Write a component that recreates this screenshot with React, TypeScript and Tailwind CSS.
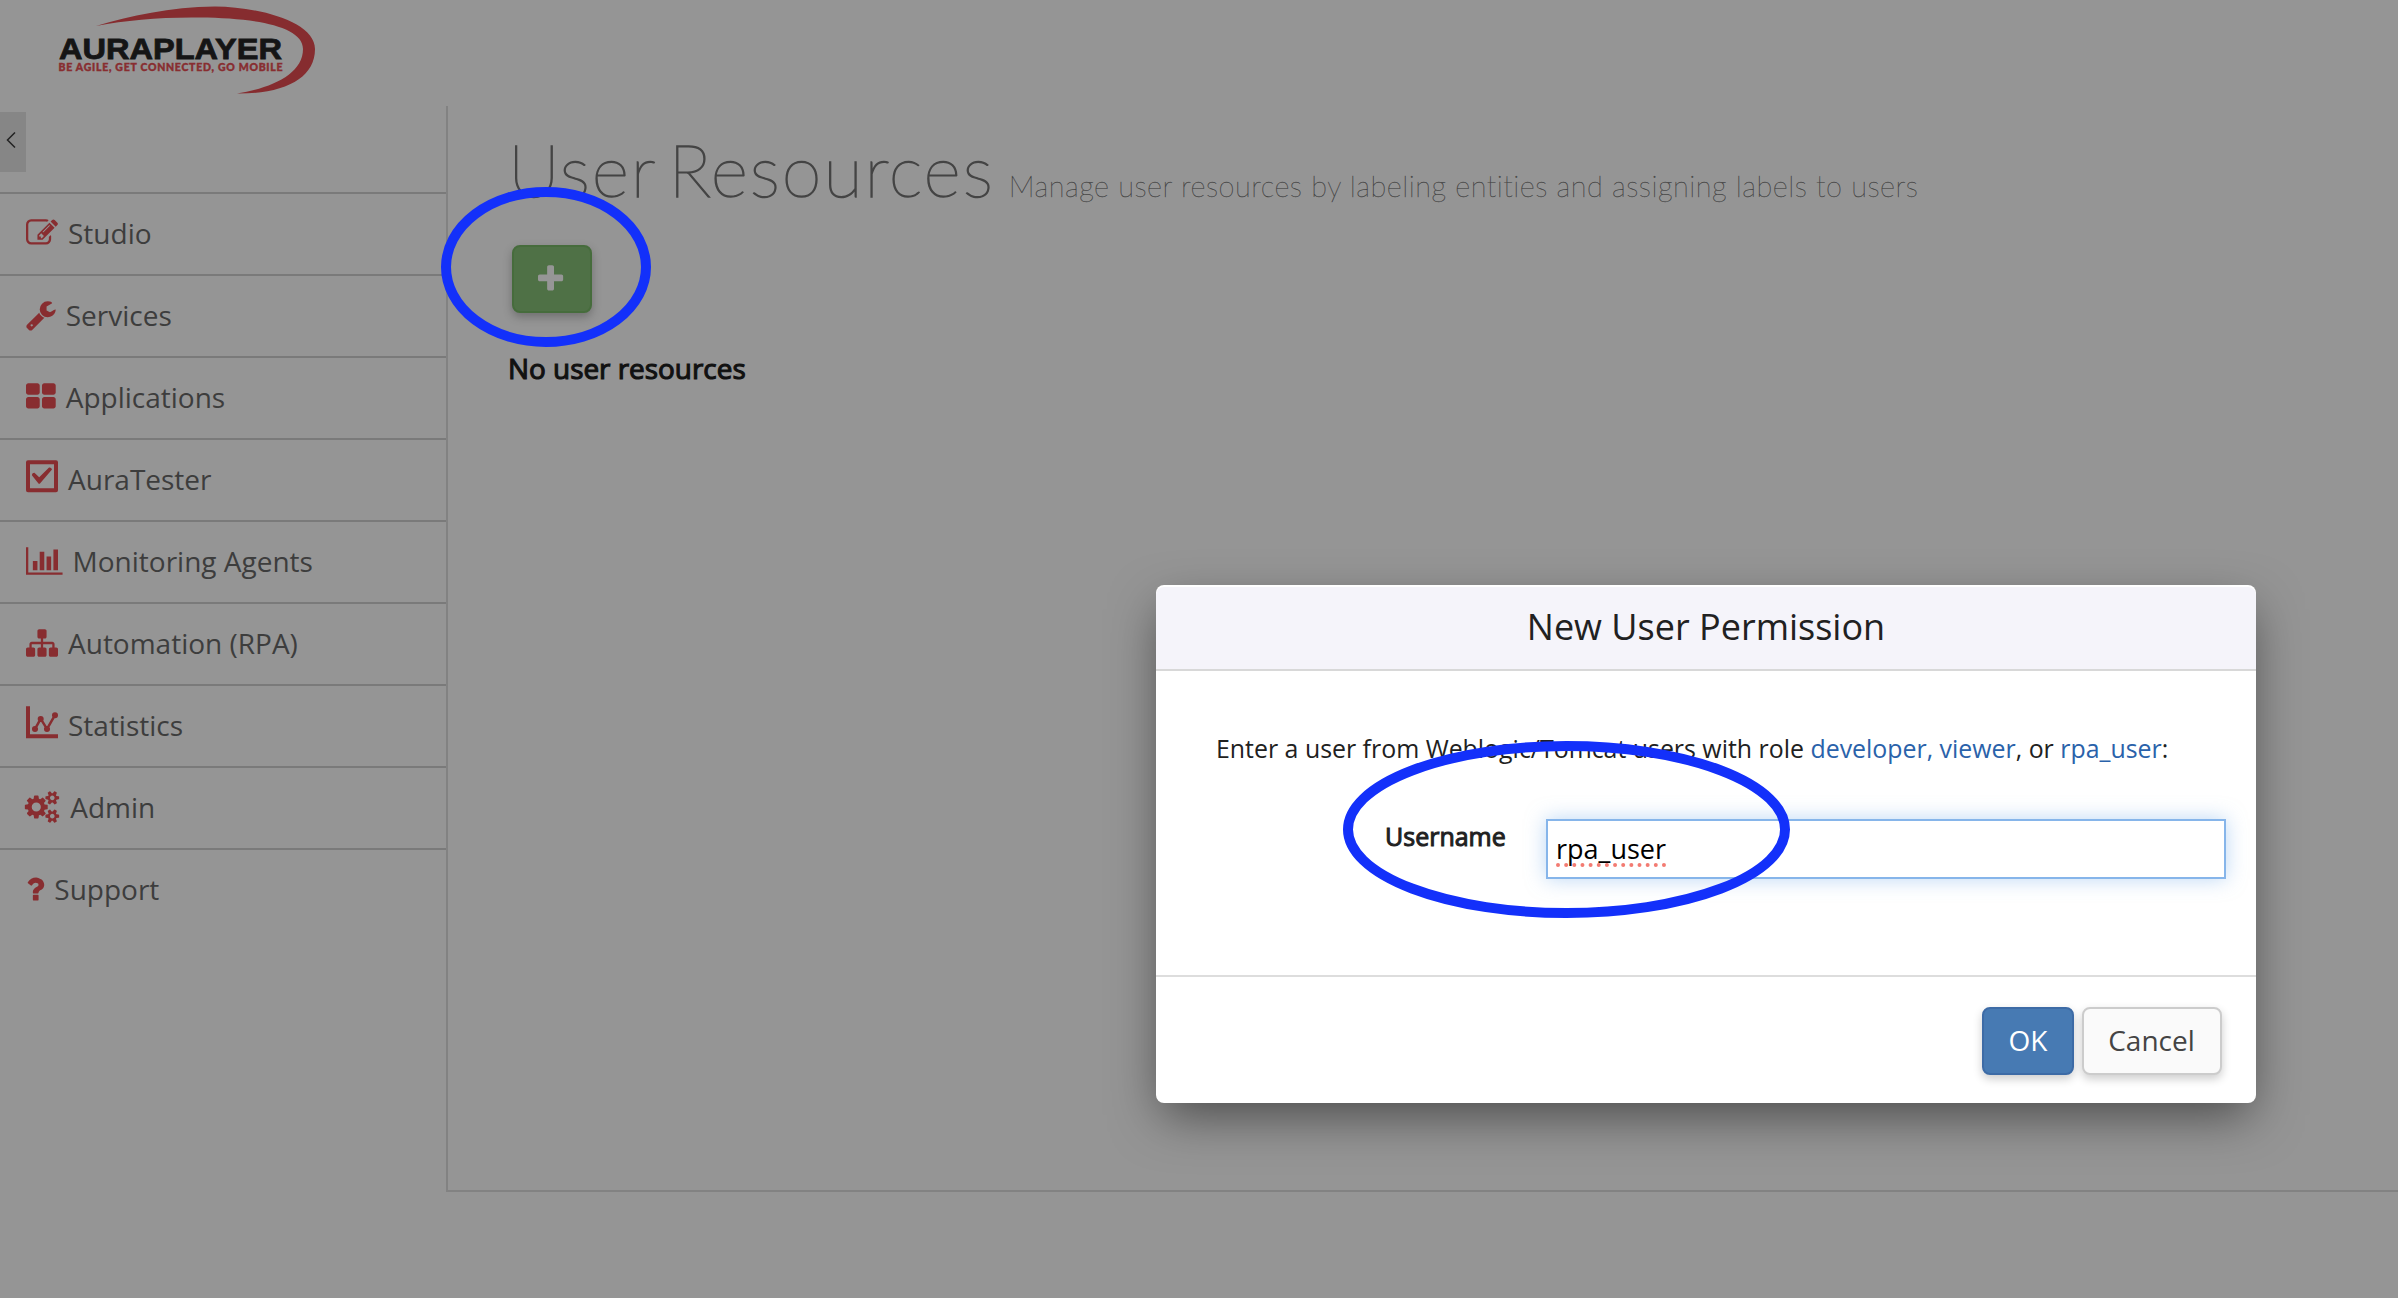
import React from 'react';

type GlyphProps = {
  width: number;
  path: string;
};

// Font glyphs share a 1792 unit em square
const Glyph: React.FC<GlyphProps> = ({ width, path }) => (
  <svg viewBox={`0 0 ${width} 1792`} className="h-8 w-auto shrink-0 overflow-visible fill-[#882d30]">
    <path d={path} />
  </svg>
);

const menuItems = [
  {
    label: 'Studio',
    width: 1792,
    path: 'M888 1184l116-116-152-152-116 116v56h96v96h56zm440-720q-16-16-33 1l-350 350q-17 17-1 33t33-1l350-350q17-17 1-33zm80 594v190q0 119-84.5 203.5t-203.5 84.5h-832q-119 0-203.5-84.5t-84.5-203.5v-832q0-119 84.5-203.5t203.5-84.5h832q63 0 117 25 15 7 18 23 3 17-9 29l-49 49q-14 14-32 8-23-6-45-6h-832q-66 0-113 47t-47 113v832q0 66 47 113t113 47h832q66 0 113-47t47-113v-126q0-13 9-22l64-64q15-15 35-7t20 29zm-96-738l288 288-672 672h-288v-288zm444 132l-92 92-288-288 92-92q28-28 68-28t68 28l152 152q28 28 28 68t-28 68z',
  },
  {
    label: 'Services',
    width: 1664,
    path: 'M384 1472q0-26-19-45t-45-19-45 19-19 45 19 45 45 19 45-19 19-45zm644-420l-682 682q-37 37-90 37-52 0-91-37l-106-108q-38-36-38-90 0-53 38-91l681-681q39 98 114.5 173.5t173.5 114.5zm634-435q0 39-23 106-47 134-164.5 217.5t-258.5 83.5q-185 0-316.5-131.5t-131.5-316.5 131.5-316.5 316.5-131.5q58 0 121.5 16.5t107.5 46.5q16 11 16 28t-16 28l-293 169v224l193 107q5-3 79-48.5t135.5-81 70.5-35.5q15 0 23.5 10t8.5 25z',
  },
  {
    label: 'Applications',
    width: 1664,
    path: 'M768 1024v384q0 52-38 90t-90 38h-512q-52 0-90-38t-38-90v-384q0-52 38-90t90-38h512q52 0 90 38t38 90zm0-768v384q0 52-38 90t-90 38h-512q-52 0-90-38t-38-90v-384q0-52 38-90t90-38h512q52 0 90 38t38 90zm896 768v384q0 52-38 90t-90 38h-512q-52 0-90-38t-38-90v-384q0-52 38-90t90-38h512q52 0 90 38t38 90zm0-768v384q0 52-38 90t-90 38h-512q-52 0-90-38t-38-90v-384q0-52 38-90t90-38h512q52 0 90 38t38 90z',
  },
  {
    label: 'AuraTester',
    width: 1792,
    path: 'M112-150h1568q112 0 112 112v1568q0 112-112 112h-1568q-112 0-112-112v-1568q0-112 112-112zm112 224v1344h1344v-1344h-1344zM336 640Q350 540 470 545L740 800L1290 258Q1420 240 1456 370L770 1155H710L340 700z',
  },
  {
    label: 'Monitoring Agents',
    width: 2048,
    path: 'M640 896v512h-256v-512h256zm384-512v1024h-256v-1024h256zm1024 1152v128h-2048v-1536h128v1408h1920zm-640-896v768h-256v-768h256zm384-384v1152h-256v-1152h256z',
  },
  {
    label: 'Automation (RPA)',
    width: 1792,
    path: 'M1792 1248v320q0 40-28 68t-68 28h-320q-40 0-68-28t-28-68v-320q0-40 28-68t68-28h96v-192h-512v192h96q40 0 68 28t28 68v320q0 40-28 68t-68 28h-320q-40 0-68-28t-28-68v-320q0-40 28-68t68-28h96v-192h-512v192h96q40 0 68 28t28 68v320q0 40-28 68t-68 28h-320q-40 0-68-28t-28-68v-320q0-40 28-68t68-28h96v-192q0-52 38-90t90-38h512v-192h-96q-40 0-68-28t-28-68v-320q0-40 28-68t68-28h320q40 0 68 28t28 68v320q0 40-28 68t-68 28h-96v192h512q52 0 90 38t38 90v192h96q40 0 68 28t28 68z',
  },
  {
    label: 'Statistics',
    width: 1792,
    path: 'M0-150h224v1568h1568v224h-1792zM335 1120a169 169 0 1 0 338 0a169 169 0 1 0-338 0zM654 560a169 169 0 1 0 338 0a169 169 0 1 0-338 0zM1007 1120a169 169 0 1 0 338 0a169 169 0 1 0-338 0zM1455 350a169 169 0 1 0 338 0a169 169 0 1 0-338 0zM424 1120h160L903 540h-160zM1096 1120h160L903 540h-160zM1096 1120h160L1704 337h-160z',
  },
  {
    label: 'Admin',
    width: 1920,
    path: 'M832 896q0-106-75-181t-181-75-181 75-75 181 75 181 181 75 181-75 75-181zm768 512q0-52-38-90t-90-38-90 38-38 90q0 53 37.5 90.5t90.5 37.5 90.5-37.5 37.5-90.5zm0-1024q0-52-38-90t-90-38-90 38-38 90q0 53 37.5 90.5t90.5 37.5 90.5-37.5 37.5-90.5zm-384 421v185q0 10-7 19.5t-16 10.5l-155 24q-11 35-32 76 34 48 90 115 7 11 7 20 0 12-7 19-23 30-82.5 89.5t-78.5 59.5q-11 0-21-7l-115-90q-37 19-77 31-11 108-23 155-7 24-30 24h-186q-11 0-20-7.5t-10-17.5l-23-153q-34-10-75-31l-118 89q-7 7-20 7-11 0-21-8-144-133-144-160 0-9 7-19 10-14 41-53t47-61q-23-44-35-82l-152-24q-10-1-17-9.5t-7-19.5v-185q0-10 7-19.5t16-10.5l155-24q11-35 32-76-34-48-90-115-7-11-7-20 0-12 7-20 22-30 82-89t79-59q11 0 21 7l115 90q34-18 77-32 11-108 23-154 7-24 30-24h186q11 0 20 7.5t10 17.5l23 153q34 10 75 31l118-89q8-7 20-7 11 0 21 8 144 133 144 160 0 8-7 19-12 16-42 54t-45 60q23 48 34 82l152 23q10 2 17 10.5t7 19.5zm640 533v140q0 16-149 31-12 27-30 52 51 113 51 138 0 4-4 7-122 71-124 71-8 0-46-47t-52-68q-20 2-30 2t-30-2q-14 21-52 68t-46 47q-2 0-124-71-4-3-4-7 0-25 51-138-18-25-30-52-149-15-149-31v-140q0-16 149-31 13-29 30-52-51-113-51-138 0-4 4-7 4-2 35-20t59-34 30-16q8 0 46 46.5t52 67.5q20-2 30-2t30 2q51-71 92-112l6-2q4 0 124 70 4 3 4 7 0 25-51 138 17 23 30 52 149 15 149 31zm0-1024v140q0 16-149 31-12 27-30 52 51 113 51 138 0 4-4 7-122 71-124 71-8 0-46-47t-52-68q-20 2-30 2t-30-2q-14 21-52 68t-46 47q-2 0-124-71-4-3-4-7 0-25 51-138-18-25-30-52-149-15-149-31v-140q0-16 149-31 13-29 30-52-51-113-51-138 0-4 4-7 4-2 35-20t59-34 30-16q8 0 46 46.5t52 67.5q20-2 30-2t30 2q51-71 92-112l6-2q4 0 124 70 4 3 4 7 0 25-51 138 17 23 30 52 149 15 149 31z',
  },
  {
    label: 'Support',
    width: 1024,
    path: 'M704 1256v240q0 16-12 28t-28 12h-240q-16 0-28-12t-12-28v-240q0-16 12-28t28-12h240q16 0 28 12t12 28zm316-600q0 54-15.500 101t-35 76.500-55 59.500-57.500 43.500-61 35.500q-41 23-68.500 65t-27.500 67q0 17-12 32.500t-28 15.500h-240q-15 0-25.500-18.500t-10.500-37.500v-45q0-83 65-156.500t143-108.500q59-27 84-56t25-76q0-42-46.500-74t-107.500-32q-65 0-108 29-35 25-107 115-13 16-31 16-12 0-25-8l-164-125q-13-10-15.500-25t5.500-28q160-266 464-266 80 0 161 31t146 83 106 127.500 41 158.500z',
  },
];

const Logo: React.FC = () => (
  <svg viewBox="0 0 290 100" className="ml-10 h-[100px] w-[290px]">
    <path
      fill="#862c2f"
      d="M56 26C90 16 130 7 175 6.500C220 7 275 22 275 49C275 78 245 94 197 93.500C232 88 263 74 263 49C263 26 215 18 160 17.500C120 17 88 20 56 26Z"
    />
    <text x="19" y="59" textLength="223" lengthAdjust="spacingAndGlyphs" className="fill-[#151515] stroke-[#151515] stroke-[0.800] font-['Liberation_Sans'] text-[29px] font-bold">AURAPLAYER</text>
    <text x="18.500" y="71" textLength="224" lengthAdjust="spacing" className="fill-[#882d30] stroke-[#882d30] stroke-[0.400] font-['Lato'] text-[10.500px] font-black">BE AGILE, GET CONNECTED, GO MOBILE</text>
  </svg>
);

const App: React.FC = () => {
  return (
    <div className="relative flex h-[1298px] w-[2398px] flex-col overflow-hidden bg-[#959595] font-['Open_Sans',sans-serif]">
      <header className="h-[106px] shrink-0">
        <Logo />
      </header>

      <div className="flex h-[1086px]">
        <aside className="w-[446px]">
          <div className="h-[86px] pt-[6px]">
            <button className="flex h-[60px] w-[26px] items-center bg-[#868686] pb-1 pl-[6px]">
              <svg viewBox="0 0 10 16" className="h-4 w-[10px] fill-none stroke-[#222222] stroke-[1.500]">
                <path d="M9 .5L1.500 8L9 15.500" />
              </svg>
            </button>
          </div>
          <nav>
            {menuItems.map((item) => (
              <a key={item.label} className="flex h-[82px] items-center gap-[10px] border-t-2 border-[#7a7a7a] pb-[3px] pl-[26px] text-[28px] text-[#3d3d3d]">
                <Glyph width={item.width} path={item.path} />
                <span>{item.label}</span>
              </a>
            ))}
          </nav>
        </aside>

        <main className="flex-1 border-b-2 border-l-2 border-[#828282] pl-[60px]">
          <h1 className="flex h-[139px] items-baseline gap-[14px] pt-[9px] font-['Lato',sans-serif] font-thin text-[#444444]">
            <span className="text-[72px] tracking-[1.950px] [word-spacing:-10px] [-webkit-text-stroke:1.4px_#444444]">User Resources</span>
            <small className="text-[29px] tracking-[0.480px] [-webkit-text-stroke:0.3px_#444444]">
              Manage user resources by labeling entities and assigning labels to users
            </small>
          </h1>
          <button className="ml-1 flex h-[68px] w-20 items-center justify-center rounded-lg border-2 border-[#466c3c] bg-[#4f7146] pr-[2px] shadow-[0_4px_10px_rgba(0,0,0,0.25)]">
            <svg viewBox="0 0 1408 1792" className="h-8 w-auto fill-[#969696]">
              <path d="M1408 736v192q0 40-28 68t-68 28h-416v416q0 40-28 68t-68 28h-192q-40 0-68-28t-28-68v-416h-416q-40 0-68-28t-28-68v-192q0-40 28-68t68-28h416v-416q0-40 28-68t68-28h192q40 0 68 28t28 68v416h416q40 0 68 28t28 68z" />
            </svg>
          </button>
          <p className="mt-[35px] text-[27.900px] text-[#111111] [-webkit-text-stroke:1.1px_#111111]">No user resources</p>
        </main>
      </div>

      <div className="absolute top-[585px] left-[1156px] flex h-[518px] w-[1100px] flex-col overflow-hidden rounded-lg bg-white pt-[2px] text-[#212121] shadow-[0_18px_50px_-6px_rgba(0,0,0,0.5)]">
        <div className="h-[84px] shrink-0 rounded-t-lg border-b-2 border-[#d8d8d8] bg-[#f5f4fa] pt-[14px] text-center text-[36px] leading-[52px]">
          New User Permission
        </div>
        <div className="h-[304px] shrink-0 pt-[59px]">
          <p className="pl-[60px] text-[24.900px] leading-9 whitespace-nowrap">
            Enter a user from Weblogic/Tomcat users with role <span className="text-[#2a62aa]">developer, viewer</span>, or{' '}
            <span className="text-[#2a62aa]">rpa_user</span>:
          </p>
          <div className="mt-[53px] flex pl-[229px]">
            <label className="w-[161px] text-[25px] leading-[34px] [-webkit-text-stroke:1px_#212121]">Username</label>
            <div className="flex h-[60px] w-[680px] items-center border-2 border-[#86b5ea] pl-2 text-[27px] text-black shadow-[0_0_20px_rgba(120,175,235,0.5)]">
              <span className="relative">
                rpa_user
                <svg viewBox="0 0 110 4" className="absolute bottom-[2px] left-0 h-1 w-[110px] overflow-visible">
                  <line x1="2" y1="2" x2="109" y2="2" stroke="#f37b72" strokeWidth="4" strokeLinecap="round" strokeDasharray="0 8.150" />
                </svg>
              </span>
            </div>
          </div>
        </div>
        <div className="flex flex-1 items-start justify-end gap-2 border-t-2 border-[#dddddd] pt-[30px] pr-[34px] text-[28px]">
          <button className="h-[68px] w-[92px] rounded-lg border-2 border-[#3d6ba6] bg-[#477ab3] pb-[2px] text-white shadow-[0_4px_10px_rgba(0,0,0,0.2)]">OK</button>
          <button className="h-[68px] w-[140px] rounded-lg border-2 border-[#cccccc] bg-[#fafafa] pr-[1px] pb-[2px] text-[#444444] shadow-[0_4px_10px_rgba(0,0,0,0.2)]">Cancel</button>
        </div>
      </div>

      <svg viewBox="0 0 2398 1298" className="pointer-events-none absolute inset-0 fill-none stroke-[#1330fa] stroke-[10]">
        <ellipse cx="546" cy="267" rx="100" ry="75" />
        <ellipse cx="1566.500" cy="829.500" rx="218.500" ry="83.500" />
      </svg>
    </div>
  );
};

export default App;
